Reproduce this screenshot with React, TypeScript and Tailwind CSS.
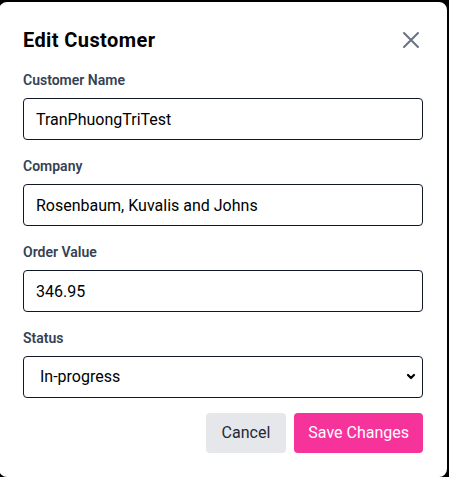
import { useState } from "react"

const App = () => {
    const [form, setForm] = useState({
        name: "TranPhuongTriTest",
        company: "Rosenbaum, Kuvalis and Johns",
        value: "346.95",
        status: "In-progress",
    })

    const update = (key: string, value: string) => setForm({ ...form, [key]: value })

    return (
        <div className="min-h-screen w-full bg-black overflow-hidden font-['Roboto','Liberation_Sans',sans-serif]">
            <div className="mt-[2px] ml-[-1px] w-[448px] bg-white rounded-lg px-6 pt-6 pb-6">
                <div className="flex items-center justify-between mb-4">
                    <h2 className="text-xl font-bold text-black tracking-[0.02em]">Edit Customer</h2>
                    <button className="text-gray-500">
                        <svg width="24" height="24" viewBox="0 0 24 24" fill="none" stroke="currentColor" strokeWidth="2" strokeLinecap="round">
                            <path d="M5 5l14 14M19 5L5 19" />
                        </svg>
                    </button>
                </div>

                <div className="flex flex-col gap-4">
                    <div>
                        <label className="block mb-2 text-sm font-semibold text-gray-700">Customer Name</label>
                        <input value={form.name} onChange={(e) => update("name", e.target.value)} className="w-full h-[42px] px-3 border border-gray-900 rounded text-base text-black outline-none" />
                    </div>
                    <div>
                        <label className="block mb-2 text-sm font-semibold text-gray-700">Company</label>
                        <input value={form.company} onChange={(e) => update("company", e.target.value)} className="w-full h-[42px] px-3 border border-gray-900 rounded text-base text-black outline-none" />
                    </div>
                    <div>
                        <label className="block mb-2 text-sm font-semibold text-gray-700">Order Value</label>
                        <input value={form.value} onChange={(e) => update("value", e.target.value)} className="w-full h-[42px] px-3 border border-gray-900 rounded text-base text-black outline-none" />
                    </div>
                    <div>
                        <label className="block mb-2 text-sm font-semibold text-gray-700">Status</label>
                        <div className="relative">
                            <select value={form.status} onChange={(e) => update("status", e.target.value)} className="w-full h-[42px] pl-4 pr-8 border border-gray-900 rounded text-base text-black bg-white appearance-none outline-none">
                                <option>Pending</option>
                                <option>In-progress</option>
                                <option>Completed</option>
                            </select>
                            <svg className="absolute right-[7px] top-[17px] pointer-events-none" width="10" height="8" viewBox="0 0 10 8" fill="none" stroke="black" strokeWidth="2.2" strokeLinecap="round" strokeLinejoin="round">
                                <path d="M2 2l3 3 3-3" />
                            </svg>
                        </div>
                    </div>
                    <div className="flex justify-end gap-2 -mt-px">
                        <button className="px-4 py-2 rounded bg-gray-200 text-gray-800">Cancel</button>
                        <button className="px-[14px] py-2 rounded bg-pink-500 text-white">Save Changes</button>
                    </div>
                </div>
            </div>
        </div>
    )
}

export default App
